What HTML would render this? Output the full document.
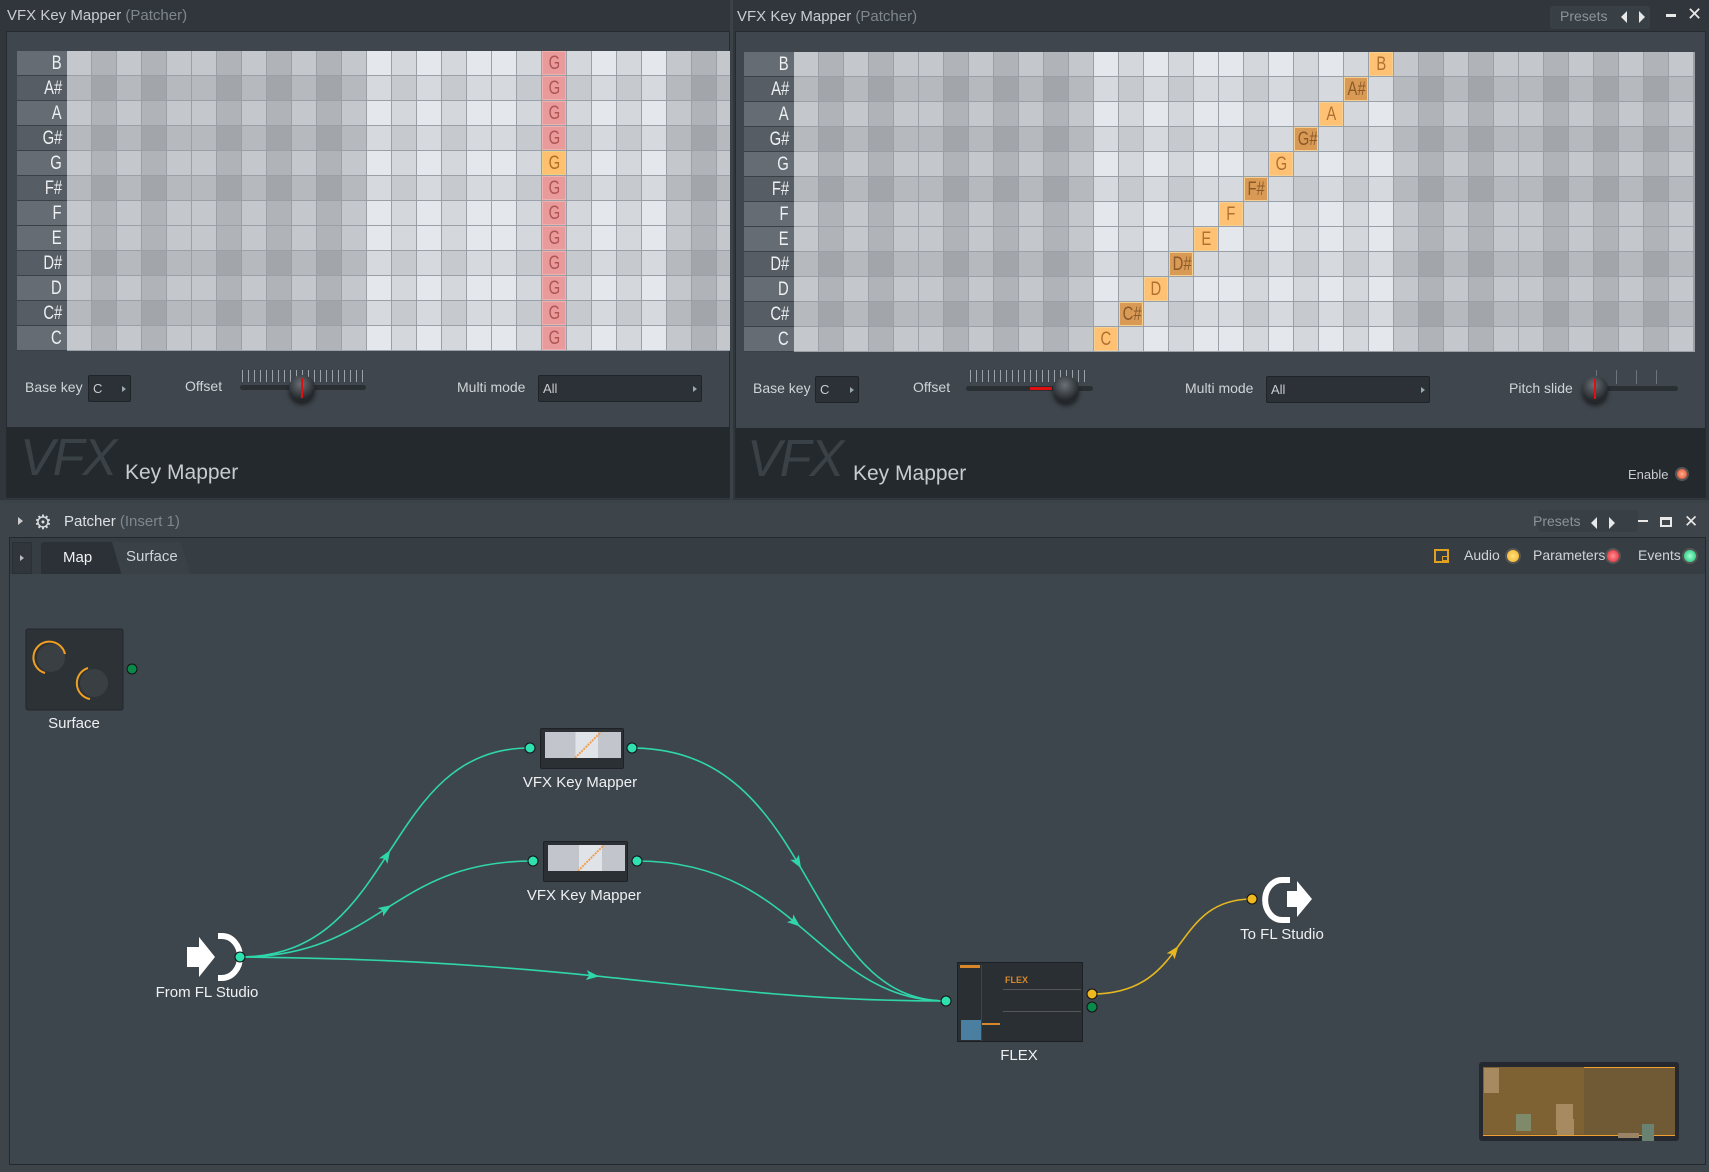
<!DOCTYPE html>
<html><head><meta charset="utf-8">
<style>
*{margin:0;padding:0;box-sizing:border-box}
body{width:1709px;height:1172px;background:#3b4248;overflow:hidden;position:relative;font-family:"Liberation Sans",sans-serif;color:#d4d8dc}
.a{position:absolute}
.title{font-size:15px;color:#c9cdd1}
.title span{color:#7f878e}
.grid{position:absolute;overflow:hidden}
.lbl{position:absolute;color:#eef0f2;font-size:19px;text-align:right;padding-right:5px;line-height:25px;border-bottom:1px solid #3a4046}
.lbl b,.hl b{font-weight:normal;display:inline-block;transform:scaleX(.78);transform-origin:right center}
.hl b{transform-origin:center}
.c{position:absolute;width:25px;height:25px;border-right:1px solid #9aa0a7;border-bottom:1px solid #9aa0a7}
.hl{position:absolute;width:24px;height:24px;text-align:center;line-height:24px;font-size:19px}
.ctl{font-size:14px;color:#cfd4d8}
.box{position:absolute;background:#2b3136;border:1px solid #1f2428;border-radius:2px;font-size:13px;color:#c8ccd0;padding-left:4px;line-height:26px}
.box:after{content:"";position:absolute;right:4px;top:10px;border-left:4px solid #9aa;border-top:3px solid transparent;border-bottom:3px solid transparent}
.knob{position:absolute;width:26px;height:26px;border-radius:50%;background:radial-gradient(circle at 45% 35%,#6a7077,#23272b 70%);box-shadow:0 4px 4px rgba(0,0,0,.5)}
.knob i{position:absolute;left:12px;top:3px;width:2px;height:20px;background:#e01010}
.track{position:absolute;height:5px;background:#2a2f34;border-radius:3px}
.ticks{position:absolute;height:12px;background:repeating-linear-gradient(90deg,#9ba1a7 0 1px,transparent 1px 6px)}
.foot{position:absolute;background:#24292d}
.vfx{position:absolute;font-size:52px;font-style:italic;color:#3a4248;letter-spacing:-2px}
.km{position:absolute;font-size:21px;color:#c7ccd1}
.nl{position:absolute;font-size:15px;color:#eef0f2;transform:translateX(-50%);white-space:nowrap}
.dot{position:absolute;width:11px;height:11px;border-radius:50%;border:1px solid #111;transform:translate(-50%,-50%)}
</style></head><body>

<div class="a" style="left:0;top:0;width:730px;height:500px;background:#30363b"></div>
<div class="a title" style="left:7px;top:7px">VFX Key Mapper <span>(Patcher)</span></div>
<div class="a" style="left:6px;top:31px;width:724px;height:467px;background:#3f464d;border:1px solid #262b30"></div>
<div class="grid" id="g1" style="left:17px;top:51px;width:713px;height:300px;background:#9aa0a7"></div>
<div class="a ctl" style="left:25px;top:379px">Base key</div>
<div class="box" style="left:88px;top:375px;width:43px;height:27px">C</div>
<div class="a ctl" style="left:185px;top:378px">Offset</div>
<div class="ticks" style="left:242px;top:370px;width:122px"></div>
<div class="track" style="left:240px;top:385px;width:126px"></div>
<div class="knob" style="left:289px;top:375px"><i></i></div>
<div class="a ctl" style="left:457px;top:379px">Multi mode</div>
<div class="box" style="left:538px;top:375px;width:164px;height:27px">All</div>
<div class="foot" style="left:7px;top:427px;width:722px;height:70px"></div>
<div class="vfx" style="left:20px;top:428px">VFX</div>
<div class="km" style="left:125px;top:461px">Key Mapper</div>

<div class="a" style="left:733px;top:0;width:976px;height:500px;background:#30363b"></div>
<div class="a title" style="left:737px;top:8px">VFX Key Mapper <span>(Patcher)</span></div>
<div class="a" style="left:1550px;top:6px;width:100px;height:23px;background:#383f45;border-radius:3px"></div>
<div class="a" style="left:1560px;top:8px;font-size:14px;color:#8c949a">Presets</div>
<div class="a" style="left:1621px;top:11px;border-right:6px solid #e8e8e8;border-top:6px solid transparent;border-bottom:6px solid transparent"></div>
<div class="a" style="left:1639px;top:11px;border-left:6px solid #e8e8e8;border-top:6px solid transparent;border-bottom:6px solid transparent"></div>
<div class="a" style="left:1666px;top:14px;width:10px;height:3px;background:#e8e8e8"></div>
<div class="a" style="left:1687px;top:4px;font-size:18px;color:#e8e8e8">✕</div>
<div class="a" style="left:735px;top:31px;width:971px;height:467px;background:#3f464d;border:1px solid #262b30"></div>
<div class="grid" id="g2" style="left:744px;top:52px;width:951px;height:300px;background:#9aa0a7"></div>
<div class="a ctl" style="left:753px;top:380px">Base key</div>
<div class="box" style="left:815px;top:376px;width:44px;height:27px">C</div>
<div class="a ctl" style="left:913px;top:379px">Offset</div>
<div class="ticks" style="left:970px;top:370px;width:120px"></div>
<div class="track" style="left:966px;top:386px;width:127px"></div>
<div class="a" style="left:1030px;top:387px;width:22px;height:3px;background:#e01010"></div>
<div class="knob" style="left:1053px;top:376px"></div>
<div class="a ctl" style="left:1185px;top:380px">Multi mode</div>
<div class="box" style="left:1266px;top:376px;width:164px;height:27px">All</div>
<div class="a ctl" style="left:1509px;top:380px">Pitch slide</div>
<div class="a" style="left:1596px;top:370px;width:80px;height:14px;background:repeating-linear-gradient(90deg,#6c7379 0 1px,transparent 1px 20px)"></div>
<div class="track" style="left:1594px;top:386px;width:84px"></div>
<div class="knob" style="left:1582px;top:376px"><i></i></div>
<div class="foot" style="left:736px;top:428px;width:969px;height:69px"></div>
<div class="vfx" style="left:747px;top:429px">VFX</div>
<div class="km" style="left:853px;top:462px">Key Mapper</div>
<div class="a" style="left:1628px;top:467px;font-size:13px;color:#c8ccd0">Enable</div>
<div class="a" style="left:1675px;top:467px;width:14px;height:14px;border-radius:50%;background:radial-gradient(#ffb090,#e04020);border:2px solid #555"></div>

<div class="a" style="left:0;top:503px;width:1709px;height:669px;background:#3d444a"></div>
<div class="a" style="left:18px;top:517px;border-left:5px solid #ccc;border-top:4px solid transparent;border-bottom:4px solid transparent"></div>
<div class="a" style="left:34px;top:510px;font-size:20px;color:#d8dcdf">⚙</div>
<div class="a title" style="left:64px;top:513px;color:#dde0e3">Patcher <span>(Insert 1)</span></div>
<div class="a" style="left:1538px;top:510px;width:100px;height:22px;background:#383f45;border-radius:3px"></div>
<div class="a" style="left:1533px;top:513px;font-size:14px;color:#8c949a">Presets</div>
<div class="a" style="left:1591px;top:517px;border-right:6px solid #e8e8e8;border-top:6px solid transparent;border-bottom:6px solid transparent"></div>
<div class="a" style="left:1609px;top:517px;border-left:6px solid #e8e8e8;border-top:6px solid transparent;border-bottom:6px solid transparent"></div>
<div class="a" style="left:1638px;top:520px;width:10px;height:2px;background:#e8e8e8"></div>
<div class="a" style="left:1660px;top:517px;width:12px;height:10px;border:2px solid #e8e8e8;border-top-width:3px"></div>
<div class="a" style="left:1684px;top:512px;font-size:17px;color:#e8e8e8">✕</div>
<div class="a" style="left:9px;top:537px;width:1697px;height:628px;background:#3e464d;border:1px solid #24292d"></div>
<div class="a" style="left:10px;top:538px;width:1695px;height:36px;background:#363d43"></div>
<div class="a" style="left:12px;top:542px;width:20px;height:32px;background:#30363b;border:1px solid #2a3035"></div>
<div class="a" style="left:20px;top:555px;border-left:4px solid #bbb;border-top:3px solid transparent;border-bottom:3px solid transparent"></div>
<div class="a" style="left:41px;top:542px;width:80px;height:32px;background:#2b3136;border-radius:3px 0 0 0"></div>
<div class="a" style="left:63px;top:549px;font-size:15px;color:#f0f2f4">Map</div>
<div class="a" style="left:112px;top:542px;width:78px;height:32px;background:#3a4147;clip-path:polygon(0 0,88% 0,100% 100%,12% 100%)"></div>
<div class="a" style="left:126px;top:548px;font-size:15px;color:#cfd4d8">Surface</div>
<div class="a" style="left:1434px;top:549px;width:15px;height:14px;border:2px solid #e0a020"></div>
<div class="a" style="left:1442px;top:556px;width:6px;height:5px;border:1px solid #e0a020"></div>
<div class="a" style="left:1464px;top:547px;font-size:14px;color:#d0d4d8">Audio</div>
<div class="a" style="left:1505px;top:548px;width:16px;height:16px;border-radius:50%;background:radial-gradient(#ffe080,#f0b020);border:2px solid #555"></div>
<div class="a" style="left:1533px;top:547px;font-size:14px;color:#d0d4d8">Parameters</div>
<div class="a" style="left:1605px;top:548px;width:16px;height:16px;border-radius:50%;background:radial-gradient(#ff9090,#e02030);border:2px solid #555"></div>
<div class="a" style="left:1638px;top:547px;font-size:14px;color:#d0d4d8">Events</div>
<div class="a" style="left:1682px;top:548px;width:16px;height:16px;border-radius:50%;background:radial-gradient(#a0ffd0,#10c070);border:2px solid #555"></div>

<svg id="wires" class="a" style="left:0;top:0" width="1709" height="1172">
<g fill="none" stroke="#2fd6aa" stroke-width="1.6">
<path class="w" d="M240 957 C400 957 380 748 530 748"/>
<path class="w" d="M240 957 C380 957 390 861 533 861"/>
<path class="w" d="M240 957 C600 960 700 1001 946 1001"/>
<path class="w" d="M632 748 C820 748 800 1001 946 1001"/>
<path class="w" d="M637 861 C800 861 820 1001 946 1001"/>
</g>
<path class="w y" d="M1092 994 C1190 994 1170 899 1252 899" fill="none" stroke="#e6b820" stroke-width="1.6"/>
<rect x="26" y="629" width="97" height="81" rx="2" fill="#2d3237" stroke="#23272b"/>
<circle cx="51" cy="658" r="14" fill="#3a3f44"/><path d="M45 673 A16 16 0 1 1 65 654" fill="none" stroke="#f0a020" stroke-width="2"/>
<circle cx="94" cy="683" r="14" fill="#3a3f44"/><path d="M90 699 A16 16 0 0 1 88 668" fill="none" stroke="#f0a020" stroke-width="2"/>
<path d="M187 947 h12 v-10 l16 20 l-16 20 v-10 h-12z" fill="#fff"/>
<path d="M218 936 h4 a18 21 0 0 1 0 42 h-4" fill="none" stroke="#fff" stroke-width="6"/>
<path d="M1290 880 h-8 a16 19 0 0 0 0 40 h8" fill="none" stroke="#fff" stroke-width="6"/>
<path d="M1287 891 h10 v-10 l15 18 l-15 18 v-10 h-10z" fill="#fff"/>
</svg>
<div class="nl" style="left:74px;top:715px">Surface</div>
<div class="dot" style="left:132px;top:669px;background:#0a8a4a"></div>

<div class="a" style="left:540px;top:728px;width:84px;height:41px;background:#2b3035;border:1px solid #1e2226;border-radius:2px">
<div class="a" style="left:4px;top:3px;width:76px;height:26px;background:linear-gradient(90deg,#c2c6cc 0 40%,#e0e3e8 40% 70%,#c2c6cc 70%)"></div>
<svg class="a" style="left:4px;top:3px" width="76" height="26"><path d="M30 26 L56 0" stroke="#f0a050" stroke-width="2" stroke-dasharray="2 1"/></svg></div>
<div class="nl" style="left:580px;top:774px">VFX Key Mapper</div>
<div class="dot" style="left:530px;top:748px;background:#2fe0b0"></div>
<div class="dot" style="left:632px;top:748px;background:#2fe0b0"></div>

<div class="a" style="left:543px;top:841px;width:85px;height:41px;background:#2b3035;border:1px solid #1e2226;border-radius:2px">
<div class="a" style="left:4px;top:3px;width:77px;height:26px;background:linear-gradient(90deg,#c2c6cc 0 40%,#e0e3e8 40% 70%,#c2c6cc 70%)"></div>
<svg class="a" style="left:4px;top:3px" width="77" height="26"><path d="M30 26 L56 0" stroke="#f0a050" stroke-width="2" stroke-dasharray="2 1"/></svg></div>
<div class="nl" style="left:584px;top:887px">VFX Key Mapper</div>
<div class="dot" style="left:533px;top:861px;background:#2fe0b0"></div>
<div class="dot" style="left:637px;top:861px;background:#2fe0b0"></div>

<div class="dot" style="left:240px;top:957px;background:#2fe0b0"></div>
<div class="nl" style="left:207px;top:984px">From FL Studio</div>

<div class="a" style="left:957px;top:962px;width:126px;height:80px;background:#2a2f34;border:1px solid #1c2024">
<div class="a" style="left:2px;top:2px;width:20px;height:3px;background:#d8882a"></div>
<div class="a" style="left:23px;top:2px;width:1px;height:76px;background:#444"></div>
<div class="a" style="left:24px;top:60px;width:18px;height:2px;background:#d8882a"></div>
<div class="a" style="left:3px;top:57px;width:20px;height:20px;background:#4a7fa0"></div>
<div class="a" style="left:47px;top:12px;font-size:9px;color:#d8882a;font-weight:bold">FLEX</div>
<div class="a" style="left:45px;top:26px;width:78px;height:1px;background:#555"></div>
<div class="a" style="left:45px;top:48px;width:78px;height:1px;background:#555"></div>
</div>
<div class="nl" style="left:1019px;top:1047px">FLEX</div>
<div class="dot" style="left:946px;top:1001px;background:#2fe0b0"></div>
<div class="dot" style="left:1092px;top:994px;background:#f0b820"></div>
<div class="dot" style="left:1092px;top:1007px;background:#0a8a4a"></div>
<div class="dot" style="left:1252px;top:899px;background:#f0b820"></div>
<div class="nl" style="left:1282px;top:926px">To FL Studio</div>

<div class="a" style="left:1479px;top:1062px;width:200px;height:79px;background:#25282f;border-radius:3px">
<div class="a" style="left:4px;top:5px;width:192px;height:69px;background:#705a36;border-top:1px solid #f0a030;border-bottom:1px solid #f0a030"></div>
<div class="a" style="left:4px;top:5px;width:101px;height:67px;background:#7e6234"></div>
<div class="a" style="left:5px;top:6px;width:15px;height:25px;background:#a88a60"></div>
<div class="a" style="left:37px;top:52px;width:15px;height:17px;background:#7f8a6a"></div>
<div class="a" style="left:77px;top:42px;width:17px;height:26px;background:#a88a60"></div>
<div class="a" style="left:78px;top:57px;width:17px;height:16px;background:#a88a60"></div>
<div class="a" style="left:139px;top:71px;width:21px;height:5px;background:#9a8466"></div>
<div class="a" style="left:163px;top:62px;width:12px;height:17px;background:#6a8272"></div>
</div>

<script>
function build(id,nc){
  var g=document.getElementById(id);var names=["B","A#","A","G#","G","F#","F","E","D#","D","C#","C"];
  var h="";
  for(var r=0;r<12;r++){
    var sharp=names[r].length>1;
    h+='<div class="lbl" style="left:0;top:'+(r*25)+'px;width:50px;height:25px;background:'+(sharp?'#565d65':'#656c74')+'"><b>'+names[r]+'</b></div>';
    for(var c=0;c<nc;c++){
      var s=c%12,oct=Math.floor(c/12),blk=[1,3,6,8,10].indexOf(s)>=0;
      var v=(oct==1)?(blk?212:228):(blk?176:196);
      if(sharp)v-=14;
      h+='<div class="c" style="left:'+(50+c*25)+'px;top:'+(r*25)+'px;background:rgb('+v+','+(v+3)+','+(v+8)+')"></div>';
    }
  }
  g.innerHTML=h;return g;
}
var g1=build("g1",27),g2=build("g2",36);
var names=["B","A#","A","G#","G","F#","F","E","D#","D","C#","C"];
var h="";
for(var r=0;r<12;r++){
  var isG=(r==4);
  h+='<div class="hl" style="left:'+(50+19*25)+'px;top:'+(r*25)+'px;background:'+(isG?'#ffc070':'#e99a9a')+';border:1px solid '+(isG?'#f0d080':'#f0b0b0')+';color:'+(isG?'#b07020':'#b05555')+'"><b>G</b></div>';
}
g1.innerHTML+=h;h="";
for(var r=0;r<12;r++){
  var n=names[r],c=12+(11-r),sh=n.length>1;
  h+='<div class="hl" style="left:'+(50+c*25)+'px;top:'+(r*25)+'px;background:'+(sh?'#d99a55':'#ffc274')+';border:1px solid #f5d090;color:'+(sh?'#8a5a2a':'#b07030')+'"><b>'+n+'</b></div>';
}
g2.innerHTML+=h;
var svg=document.getElementById("wires"),ns="http://www.w3.org/2000/svg";
var ws=svg.querySelectorAll(".w");
for(var i=0;i<ws.length;i++){
  var p=ws[i],L=p.getTotalLength(),m=p.getPointAtLength(L/2),q=p.getPointAtLength(L/2-2);
  var ang=Math.atan2(m.y-q.y,m.x-q.x)*180/Math.PI;
  var t=document.createElementNS(ns,"polygon");
  t.setAttribute("points","6,0 -7,-5 -4,0 -7,5");
  t.setAttribute("fill",p.classList.contains("y")?"#e6b820":"#2fd6aa");
  t.setAttribute("transform","translate("+m.x+","+m.y+") rotate("+ang+")");
  svg.appendChild(t);
}
</script>
</body></html>
